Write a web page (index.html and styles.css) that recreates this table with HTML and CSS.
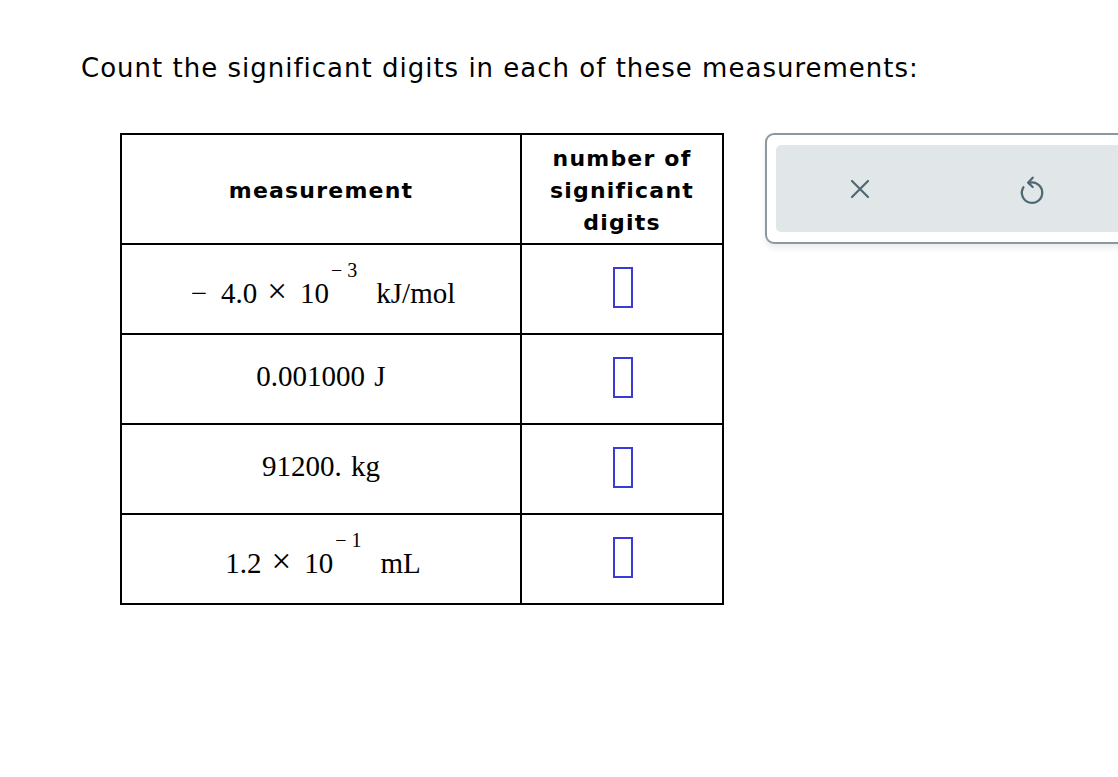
FILE: index.html
```html
<!DOCTYPE html>
<html>
<head>
<meta charset="utf-8">
<link rel="stylesheet" href="styles.css">
</head>
<body>
<div class="page">
  <p class="prompt">Count the significant digits in each of these measurements:</p>
  <div class="work">
    <table class="grid">
      <tr class="head">
        <th class="col-m">measurement</th>
        <th class="col-n">number of<br>significant<br>digits</th>
      </tr>
      <tr>
        <td class="math"><span class="expr sci"><span class="neg">&minus;</span>4.0<span class="op">&times;</span>10<sup class="exp">&minus; 3</sup><span class="unit">kJ/mol</span></span></td>
        <td class="ans"><span class="box"></span></td>
      </tr>
      <tr>
        <td class="math"><span class="expr">0.001000 <span class="unit-s">J</span></span></td>
        <td class="ans"><span class="box"></span></td>
      </tr>
      <tr>
        <td class="math"><span class="expr">91200. <span class="unit-s">kg</span></span></td>
        <td class="ans"><span class="box"></span></td>
      </tr>
      <tr>
        <td class="math"><span class="expr sci">1.2<span class="op">&times;</span>10<sup class="exp">&minus; 1</sup><span class="unit">mL</span></span></td>
        <td class="ans"><span class="box"></span></td>
      </tr>
    </table>
    <div class="panel">
      <div class="tools">
        <button class="tool" aria-label="clear">
          <svg width="26" height="26" viewBox="0 0 26 26"><path d="M5 5 L21 21 M21 5 L5 21" stroke="#4f6872" stroke-width="2.2" stroke-linecap="round" fill="none"/></svg>
        </button>
        <button class="tool" aria-label="undo">
          <svg width="30" height="34" viewBox="0 0 26 30"><path d="M6.3 13.5 A9 9 0 1 0 11.5 9.6" stroke="#4f6872" stroke-width="2" stroke-linecap="round" fill="none"/><path d="M14.5 5 L10.4 9.4 L14.5 13.2" stroke="#4f6872" stroke-width="2" stroke-linecap="round" stroke-linejoin="round" fill="none"/></svg>
        </button>
      </div>
    </div>
  </div>
</div>
</body>
</html>
```

FILE: styles.css
```css
html, body {
  margin: 0;
  padding: 0;
  background: #fff;
  overflow: hidden;
}
.page {
  padding: 49px 0 0 81px;
  font-family: "DejaVu Sans", Verdana, sans-serif;
  color: #000;
}
.prompt {
  margin: 0;
  font-size: 26px;
  letter-spacing: 1px;
  line-height: 38px;
  white-space: nowrap;
}
.work {
  display: flex;
  align-items: flex-start;
  margin-top: 46px;
  margin-left: 39px;
}
.grid {
  flex: 0 0 auto;
  border-collapse: collapse;
  border: 2px solid #000;
}
.grid th, .grid td {
  border: 2px solid #000;
  padding: 0;
  text-align: center;
}
.head th {
  height: 104px;
  padding-top: 4px;
  font-family: "DejaVu Sans", Verdana, sans-serif;
  font-weight: bold;
  font-size: 22px;
  letter-spacing: 1.2px;
  line-height: 32px;
}
.col-m { width: 398px; }
.col-n { width: 200px; }
.grid td { height: 88px; }
.math {
  font-family: "Liberation Serif", "Times New Roman", serif;
  font-size: 29px;
}
.expr {
  display: inline-block;
  white-space: nowrap;
  margin-bottom: 6px;
}
.expr.sci {
  padding-top: 6px;
  margin-bottom: 0;
  margin-left: 4px;
}
.neg { margin-right: 14px; }
.op {
  font-size: 35px;
  line-height: 1;
  margin: 0 13px 0 10px;
}
.exp {
  font-size: 20px;
  vertical-align: 0;
  position: relative;
  top: -26px;
  margin-left: 2px;
}
.unit { margin-left: 19px; }
.unit-s { margin-left: 2px; }
.ans { vertical-align: middle; }
.box {
  display: inline-block;
  width: 16px;
  height: 37px;
  border: 2px solid #3a3ad6;
  vertical-align: middle;
  margin-top: -4px;
  margin-left: 2px;
}
.panel {
  margin-left: 41px;
  flex: 0 0 auto;
  width: 380px;
  border: 2px solid #8a999f;
  border-radius: 9px;
  padding: 10px 9px;
  box-shadow: 0 4px 6px rgba(0,0,0,0.08);
}
.tools {
  display: flex;
  background: #e1e6e9;
  border-radius: 5px;
  height: 87px;
  align-items: center;
}
.tool {
  border: 0;
  background: transparent;
  padding: 0;
  display: flex;
  cursor: pointer;
}
.tool:first-child { margin-left: 71px; }
.tool + .tool { margin-left: 143px; }
```
